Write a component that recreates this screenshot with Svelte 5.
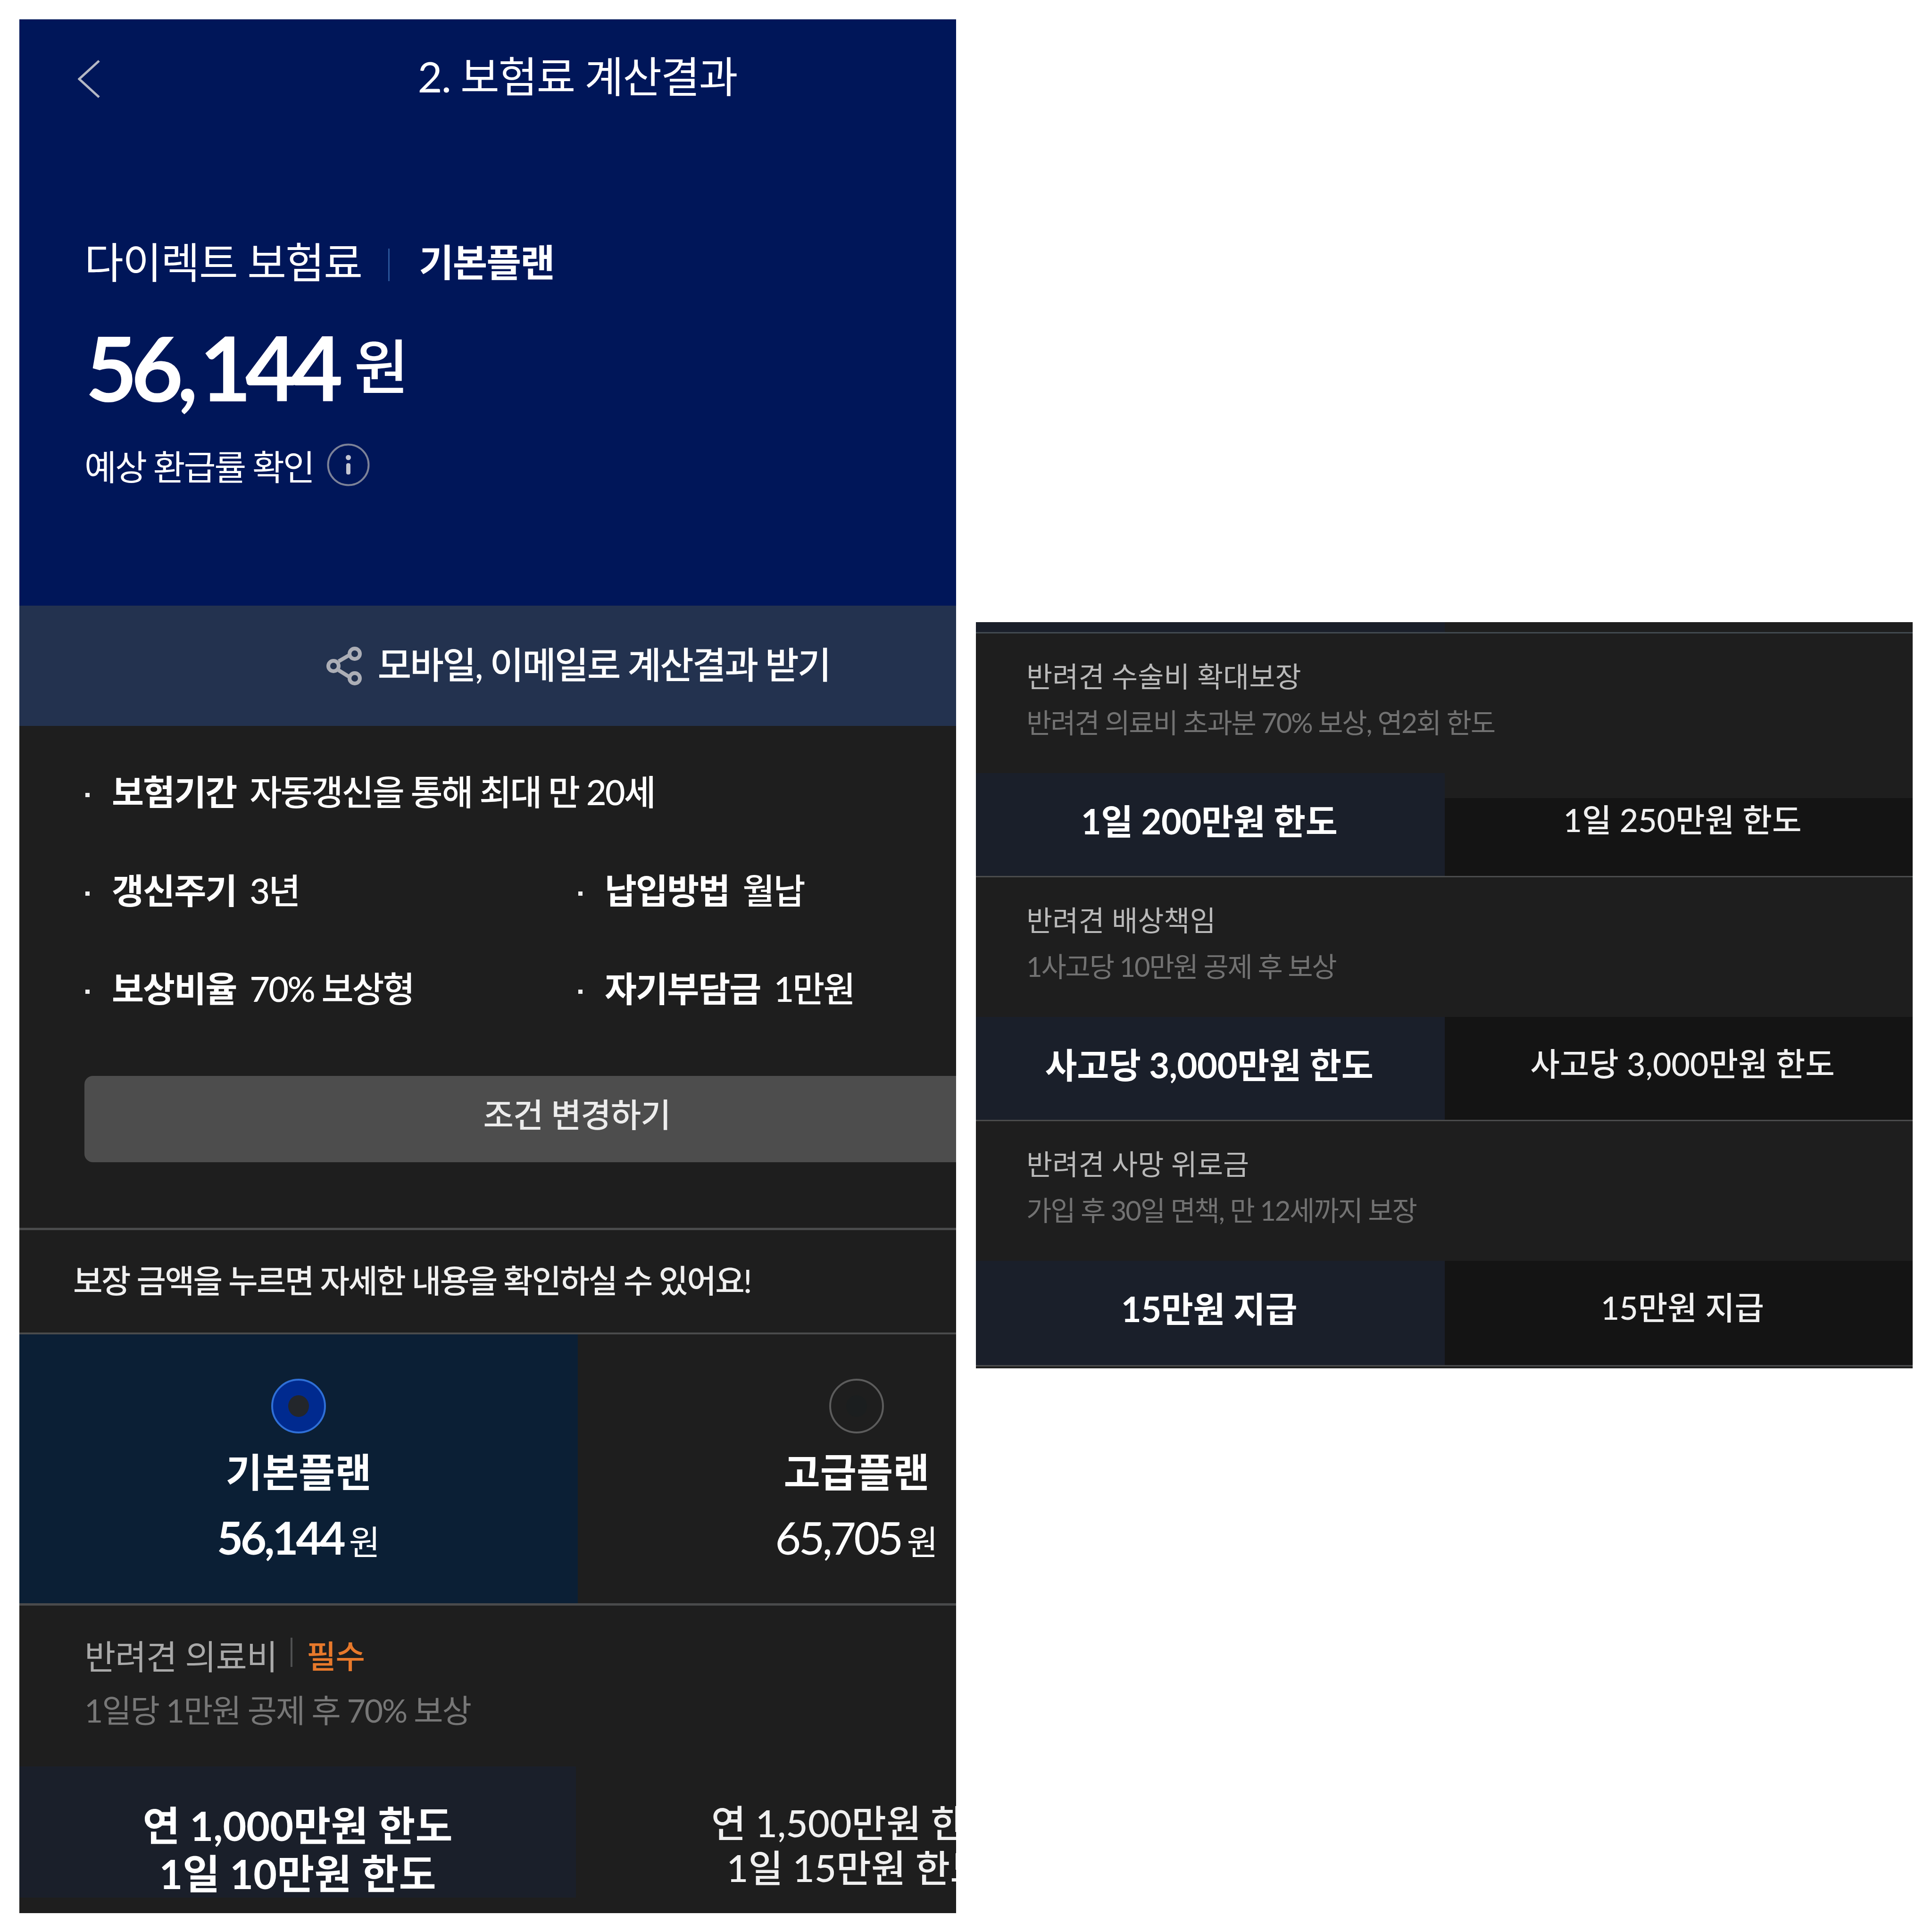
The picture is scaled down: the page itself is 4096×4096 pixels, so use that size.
<script>
	const terms = [
		{ label: '갱신주기', value: '3년' },
		{ label: '납입방법', value: '월납' },
		{ label: '보상비율', value: '70% 보상형' },
		{ label: '자기부담금', value: '1만원' }
	];

	const plans = [
		{ name: '기본플랜', price: '56,144', selected: true },
		{ name: '고급플랜', price: '65,705', selected: false }
	];

	const coverages = [
		{
			title: '반려견 수술비 확대보장',
			note: '반려견 의료비 초과분 70% 보상, 연2회 한도',
			basic: '1일 200만원 한도',
			premium: '1일 250만원 한도',
			inset: true
		},
		{
			title: '반려견 배상책임',
			note: '1사고당 10만원 공제 후 보상',
			basic: '사고당 3,000만원 한도',
			premium: '사고당 3,000만원 한도'
		},
		{
			title: '반려견 사망 위로금',
			note: '가입 후 30일 면책, 만 12세까지 보장',
			basic: '15만원 지급',
			premium: '15만원 지급'
		}
	];
</script>

<main class="sheet">
	<section class="panel main-panel">
		<div class="page">
			<div class="hero">
				<header class="topbar">
					<svg class="back" viewBox="0 0 47 81" width="47" height="81" aria-hidden="true">
						<path d="M45 2 3 40.5 45 79" fill="none" stroke="#b4b8c4" stroke-width="5" />
					</svg>
					<h1>2. 보험료 계산결과</h1>
				</header>
				<p class="hero-label">
					<span>다이렉트 보험료</span>
					<i class="hero-sep"></i>
					<strong>기본플랜</strong>
				</p>
				<p class="hero-price"><b>56,<span class="after-comma">144</span></b><span class="won">원</span></p>
				<p class="hero-refund">
					<span>예상 환급률 확인</span>
					<svg viewBox="0 0 91 91" width="91" height="91" aria-hidden="true">
						<circle cx="45.5" cy="45.5" r="43" fill="none" stroke="#7c8298" stroke-width="4" />
						<circle cx="45.5" cy="30" r="5.5" fill="#c3c6d2" />
						<rect x="41" y="42" width="9" height="24" rx="4" fill="#c3c6d2" />
					</svg>
				</p>
			</div>

			<div class="share">
				<svg viewBox="0 0 76 82" width="76" height="82" aria-hidden="true">
					<g fill="none" stroke="#acaeb6" stroke-width="8">
						<path d="M26 31 50 17M26 50l24 15" />
						<circle cx="15" cy="41" r="11" />
						<circle cx="60" cy="15" r="11" />
						<circle cx="60" cy="67" r="11" />
					</g>
				</svg>
				<span>모바일, 이메일로 계산결과 받기</span>
			</div>

			<div class="summary">
				<p class="term wide"><strong>보험기간</strong><span>자동갱신을 통해 최대 만 20세</span></p>
				<div class="term-grid">
					{#each terms as term (term.label)}
						<p class="term"><strong>{term.label}</strong><span>{term.value}</span></p>
					{/each}
				</div>
				<button type="button" class="change">조건 변경하기</button>
			</div>

			<p class="notice">보장 금액을 누르면 자세한 내용을 확인하실 수 있어요!</p>

			<div class="plans">
				{#each plans as plan (plan.name)}
					<div class="plan" class:selected={plan.selected}>
						<span class="radio"><i></i></span>
						<strong class="plan-name">{plan.name}</strong>
						<p class="plan-price"><b>{plan.price}</b><span>원</span></p>
					</div>
				{/each}
			</div>

			<div class="medical">
				<p class="medical-title">
					<span>반려견 의료비</span>
					<i></i>
					<em>필수</em>
				</p>
				<p class="medical-note">1일당 1만원 공제 후 70% 보상</p>
				<div class="medical-cells">
					<div class="medical-cell basic">연 1,000만원 한도<br />1일 10만원 한도</div>
					<div class="medical-cell premium">연 1,500만원 한도<br />1일 15만원 한도</div>
				</div>
			</div>
		</div>
	</section>

	<section class="panel side-panel">
		<div class="strip"></div>
		{#each coverages as row (row.title)}
			<article class="coverage">
				<h2>{row.title}</h2>
				<p>{row.note}</p>
				<div class="cells">
					<div class="cell basic">{row.basic}</div>
					<div class="cell premium" class:inset={row.inset}>{row.premium}</div>
				</div>
			</article>
		{/each}
	</section>
</main>

<style>
	:global(body) {
		background: #fff;
	}
	.sheet {
		display: flex;
		align-items: flex-start;
		gap: 42px;
		box-sizing: border-box;
		width: 4096px;
		height: 4096px;
		padding: 41px;
		font-family: Lato, 'Noto Sans CJK KR', sans-serif;
		color: #fff;
	}
	.panel {
		flex: none;
		background: #1e1e1e;
		overflow: hidden;
	}
	p,
	h1,
	h2 {
		margin: 0;
		font-weight: 400;
	}
	.main-panel {
		width: 1986px;
		height: 4015px;
	}
	.page {
		width: 2366px;
	}

	.hero {
		height: 1243px;
		background: #001659;
		overflow: hidden;
	}
	.topbar {
		display: grid;
		grid-template-columns: 1fr auto 1fr;
		align-items: center;
		height: 244px;
	}
	.back {
		margin: 8px 0 0 124px;
	}
	.topbar h1 {
		font-size: 90px;
		font-weight: 400;
		line-height: 100px;
		letter-spacing: -2px;
		margin-top: -5px;
	}
	.hero-label {
		display: flex;
		align-items: center;
		height: 100px;
		margin: 216px 0 0 138px;
		font-size: 90px;
		letter-spacing: -1.8px;
	}
	.hero-sep {
		width: 3px;
		height: 69px;
		margin: 20px 62px 0 56px;
		background: #2a5599;
	}
	.hero-label strong {
		font-size: 80px;
		letter-spacing: -2px;
	}
	.hero-price {
		display: flex;
		align-items: center;
		height: 190px;
		margin: 81px 0 0 140px;
	}
	.hero-price b {
		font-size: 190px;
		letter-spacing: -13px;
		font-weight: 700;
		line-height: 190px;
	}
	.after-comma {
		margin-left: 16px;
	}
	.won {
		font-size: 126px;
		font-weight: 500;
		margin: -14px 0 0 36px;
	}
	.hero-refund {
		display: flex;
		align-items: center;
		gap: 28px;
		height: 100px;
		margin: 63px 0 0 138px;
		font-size: 74px;
		font-weight: 400;
		letter-spacing: -3.2px;
	}

	.share {
		display: flex;
		align-items: center;
		justify-content: center;
		gap: 33px;
		height: 255px;
		background: #23324f;
		font-size: 78px;
		font-weight: 500;
		letter-spacing: -3px;
	}
	.share svg {
		margin-left: 3px;
	}
	.share span {
		margin-top: -13px;
	}

	.summary {
		padding: 90px 0 139px 142px;
		border-bottom: 5px solid #4a4b4c;
	}
	.term {
		position: relative;
		display: flex;
		gap: 28px;
		height: 100px;
		padding-left: 54px;
		font-size: 74px;
		font-weight: 500;
		line-height: 100px;
		letter-spacing: -3px;
	}
	.term::before {
		content: '';
		position: absolute;
		left: -2px;
		top: 52px;
		width: 9px;
		height: 9px;
		background: #eee;
	}
	.term strong {
		font-size: 74px;
		letter-spacing: -2px;
	}
	.term-grid {
		display: grid;
		grid-template-columns: 1045px 1045px;
		row-gap: 108px;
		margin-top: 109px;
	}
	.change {
		display: block;
		width: 2088px;
		height: 183px;
		margin: 135px 0 0 -4px;
		padding: 0 0 26px;
		border: 0;
		border-radius: 18px;
		background: #4d4d4d;
		color: #ececec;
		font: inherit;
		font-size: 70px;
		font-weight: 500;
		letter-spacing: -1px;
	}

	.notice {
		height: 221px;
		padding-left: 114px;
		border-bottom: 4px solid #4a4b4c;
		box-sizing: border-box;
		font-size: 68px;
		font-weight: 500;
		line-height: 213px;
		letter-spacing: -2.6px;
		color: #f0f0f0;
	}

	.plans {
		display: grid;
		grid-template-columns: 1184px 1182px;
		height: 570px;
		border-bottom: 5px solid #4a4b4c;
	}
	.plan {
		display: flex;
		flex-direction: column;
		align-items: center;
		padding-top: 94px;
	}
	.plan.selected {
		background: #0b1f35;
	}
	.radio {
		display: flex;
		align-items: center;
		justify-content: center;
		box-sizing: border-box;
		width: 116px;
		height: 116px;
		border: 4px solid #5c5c5c;
		border-radius: 50%;
	}
	.radio i {
		width: 44px;
		height: 46px;
		border-radius: 50%;
		background: #1b1e1f;
	}
	.selected .radio {
		border-color: #2f6fd6;
		background: #002a8f;
	}
	.selected .radio i {
		background: #23262b;
	}
	.plan-name {
		margin-top: 32px;
		font-size: 84px;
		line-height: 100px;
	}
	.plan-price {
		display: flex;
		align-items: baseline;
		margin-top: 43px;
		line-height: 90px;
	}
	.plan-price b {
		font-size: 95px;
		font-weight: 400;
		letter-spacing: -5px;
	}
	.selected .plan-price b {
		font-weight: 700;
	}
	.plan-price span {
		margin-left: 12px;
		font-size: 72px;
	}

	.medical {
		padding-top: 53px;
	}
	.medical-title {
		display: flex;
		align-items: center;
		height: 100px;
		padding-left: 138px;
		font-size: 72px;
		letter-spacing: -1px;
		color: #a9a9a9;
	}
	.medical-title i {
		width: 4px;
		height: 62px;
		margin: -8px 30px 0 28px;
		background: #4f5051;
	}
	.medical-title em {
		font-style: normal;
		color: #e8792b;
		font-size: 68px;
		font-weight: 500;
	}
	.medical-note {
		height: 90px;
		margin-top: 24px;
		padding-left: 138px;
		font-size: 68px;
		line-height: 90px;
		letter-spacing: -2.3px;
		color: #777;
	}
	.medical-cells {
		display: grid;
		grid-template-columns: 1180px 1186px;
		margin-top: 74px;
		height: 269px;
		text-align: center;
	}
	.medical-cell {
		padding-top: 74px;
	}
	.medical-cell.basic {
		background: #1a1f2a;
		font-size: 86px;
		font-weight: 700;
		line-height: 102px;
	}
	.medical-cell.premium {
		padding-top: 72px;
		font-size: 80px;
		font-weight: 500;
		line-height: 95px;
		color: #f0f0f0;
	}

	.side-panel {
		width: 1986px;
		height: 1582px;
		margin-top: 1278px;
	}
	.strip {
		box-sizing: border-box;
		height: 24px;
		border-bottom: 3px solid #424a50;
		background: linear-gradient(to right, #1a1f2a 994px, #1e1e1e 994px);
	}
	.coverage {
		padding-top: 56px;
		border-bottom: 3px solid #4a4b4c;
	}
	.coverage h2 {
		height: 70px;
		padding-left: 107px;
		font-size: 60px;
		line-height: 70px;
		letter-spacing: 0;
		color: #b9b9b9;
	}
	.coverage p {
		height: 70px;
		margin-top: 28px;
		padding-left: 107px;
		font-size: 58px;
		line-height: 70px;
		letter-spacing: -2.2px;
		color: #727272;
	}
	.cells {
		display: grid;
		grid-template-columns: 994px 992px;
		height: 218px;
		margin-top: 72px;
		text-align: center;
	}
	.coverage:last-child .cells {
		height: 221px;
	}
	.cell {
		line-height: 70px;
	}
	.cell.basic {
		padding: 67px 5px 0 0;
		background: #1a1f2a;
		font-size: 74px;
		font-weight: 700;
		letter-spacing: -0.4px;
	}
	.cell.premium {
		padding: 64px 0 0 16px;
		background: #141414;
		font-size: 68px;
		font-weight: 500;
		color: #f0f0f0;
	}
	.cell.premium.inset {
		margin-top: 53px;
		padding-top: 11px;
	}
</style>
